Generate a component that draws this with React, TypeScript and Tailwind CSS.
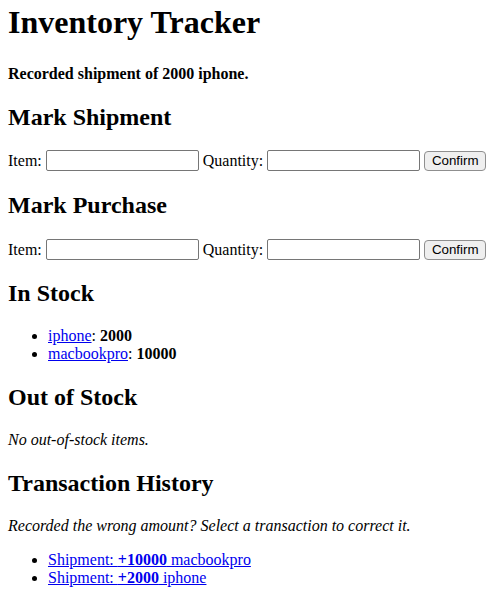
import React from "react";

const linkCls = "text-[#0000ee] underline";
const inputCls =
  "w-[153px] h-[21px] border border-[#767676] rounded-[2px] px-[2px] py-[1px] bg-white font-['Liberation_Sans',sans-serif] text-[13.33px]";

function Row() {
  return (
    <form className="flex items-center h-[21px] mt-0 mb-4" onSubmit={(e) => e.preventDefault()}>
      <span>Item:&nbsp;</span>
      <input type="text" className={inputCls} />
      <span>&nbsp;Quantity:&nbsp;</span>
      <input type="text" className={inputCls} />
      <span>&nbsp;</span>
      <button
        type="submit"
        className="h-[20px] w-[62px] border border-[#8f8f8f] rounded-[4px] bg-[#efefef] px-[6px] font-['Liberation_Sans',sans-serif] text-[13.33px] leading-[18px] text-black"
      >
        Confirm
      </button>
    </form>
  );
}

export default function App() {
  return (
    <div className="bg-white text-black font-['Liberation_Serif',serif] text-[16px] leading-[normal] px-2 pt-1 pb-2 min-h-[599px]">
      <h1 className="text-[32px] font-bold mt-0 mb-[21.44px]">Inventory Tracker</h1>
      <p className="font-bold mt-[23.5px] mb-4">Recorded shipment of 2000 iphone.</p>

      <h2 className="text-[24px] font-bold mt-[21px] mb-[19.92px]">Mark Shipment</h2>
      <Row />

      <h2 className="text-[24px] font-bold mt-[21px] mb-[19.92px]">Mark Purchase</h2>
      <Row />

      <h2 className="text-[24px] font-bold my-[19.92px]">In Stock</h2>
      <ul className="list-disc pl-10 my-4">
        <li>
          <a href="#" className={linkCls}>iphone</a>: <b>2000</b>
        </li>
        <li>
          <a href="#" className={linkCls}>macbookpro</a>: <b>10000</b>
        </li>
      </ul>

      <h2 className="text-[24px] font-bold mt-[21px] mb-[19.92px]">Out of Stock</h2>
      <p className="italic my-4">No out-of-stock items.</p>

      <h2 className="text-[24px] font-bold mt-[21px] mb-[19.92px]">Transaction History</h2>
      <p className="italic my-4">Recorded the wrong amount? Select a transaction to correct it.</p>
      <ul className="list-disc pl-10 my-4">
        <li>
          <a href="#" className={linkCls}>
            Shipment: <b>+10000</b> macbookpro
          </a>
        </li>
        <li>
          <a href="#" className={linkCls}>
            Shipment: <b>+2000</b> iphone
          </a>
        </li>
      </ul>
    </div>
  );
}
